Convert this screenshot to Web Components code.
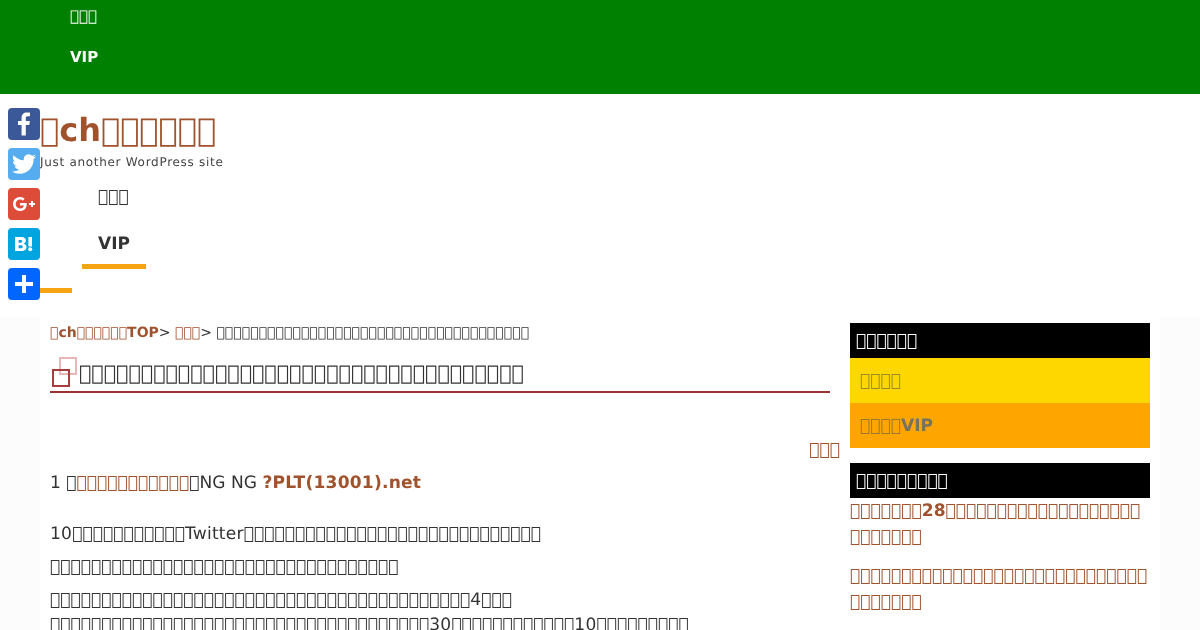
<!DOCTYPE html>
<html lang="ja">
<head>
<meta charset="utf-8">
<title>ch</title>
<style>
html, body { margin: 0; height: 630px; overflow: hidden; }
body { background: #fcfcfd; font-family: "DejaVu Sans", sans-serif; color: #333; text-rendering: geometricPrecision; }
</style>
</head>
<body>
<x-page></x-page>
<script>
// the reference shows only "missing glyph" boxes for its text, ~n = n of them
const T = s => s.replace(/~(\d+)/g, (m, n) => '\uE000'.repeat(+n));

class XTopnav extends HTMLElement {
    constructor() {
        super();
        this.attachShadow({mode: 'open'}).innerHTML = T(`
            <style>
                :host { display: block; background: #008000; color: #fff; font-size: 15px; height: 94px; box-sizing: border-box; padding-left: 70px; }
                ul { list-style: none; margin: 0; padding: 0; display: flex; flex-direction: column; gap: 9px; }
                li { line-height: 32px; }
            </style>
            <ul><li>~3</li><li><b>VIP</b></li></ul>
        `);
    }
}

class XSocial extends HTMLElement {
    constructor() {
        super();
        this.attachShadow({mode: 'open'}).innerHTML = `
            <style>
                :host { position: absolute; left: 8px; top: 108px; display: flex; flex-direction: column; gap: 8px; }
                svg { display: block; width: 32px; height: 32px; border-radius: 4px; }
            </style>
            <svg viewBox="0 0 32 32" style="background:#3b5998"><path fill="#fff" d="M17.78 27.5V17.008h3.522l.527-4.09h-4.05v-2.61c0-1.182.33-1.99 2.023-1.99h2.166V4.66c-.375-.05-1.66-.16-3.155-.16-3.123 0-5.26 1.905-5.26 5.405v3.016h-3.53v4.09h3.53V27.5h4.223z"/></svg>
            <svg viewBox="0 0 32 32" style="background:#55acee"><path fill="#fff" d="M28 8.557a9.913 9.913 0 0 1-2.828.775 4.93 4.93 0 0 0 2.166-2.725 9.738 9.738 0 0 1-3.13 1.194 4.92 4.92 0 0 0-3.593-1.55 4.924 4.924 0 0 0-4.794 6.049c-4.09-.21-7.72-2.17-10.15-5.15a4.942 4.942 0 0 0-.665 2.477c0 1.71.87 3.214 2.19 4.1a4.968 4.968 0 0 1-2.23-.616v.06c0 2.39 1.7 4.38 3.952 4.83-.414.115-.85.174-1.297.174-.318 0-.626-.03-.928-.086a4.935 4.935 0 0 0 4.6 3.42 9.893 9.893 0 0 1-6.114 2.107c-.398 0-.79-.023-1.175-.068a13.953 13.953 0 0 0 7.55 2.213c9.056 0 14.01-7.507 14.01-14.013 0-.213-.005-.426-.015-.637.96-.695 1.795-1.56 2.455-2.55z"/></svg>
            <svg viewBox="0 0 32 32" style="background:#dd4b39"><path fill="#fff" d="M27 15h-2v-2h-2v2h-2v2h2v2h2v-2h2m-15-2v2.4h3.97c-.16 1.03-1.2 3.02-3.97 3.02-2.39 0-4.34-1.98-4.34-4.42s1.95-4.42 4.34-4.42c1.36 0 2.27.58 2.79 1.08l1.9-1.83C15.47 9.69 13.89 9 12 9c-3.87 0-7 3.13-7 7s3.13 7 7 7c4.04 0 6.72-2.84 6.72-6.84 0-.46-.05-.81-.11-1.16H12z"/></svg>
            <svg viewBox="0 0 32 32" style="background:#00a4de"><path fill="#fff" fill-rule="evenodd" d="M7 9h6.4c2.9 0 4.5 1.3 4.5 3.6 0 1.5-.8 2.6-2.3 3.1 1.9.4 2.9 1.6 2.9 3.4 0 2.6-1.8 4-4.9 4H7zM10.6 11.9v2.8h2c1 0 1.6-.5 1.6-1.4s-.6-1.4-1.6-1.4zM10.6 17.3v3h2.2c1.2 0 1.9-.5 1.9-1.5s-.7-1.5-1.9-1.5z"/><path fill="#fff" d="M20.4 9h3.6v9.4h-3.6z"/><circle fill="#fff" cx="22.2" cy="21.2" r="2"/></svg>
            <svg viewBox="0 0 32 32" style="background:#0166ff"><path fill="#fff" d="M14 7h4v18h-4z"/><path fill="#fff" d="M7 14h18v4H7z"/></svg>
        `;
    }
}

class XMainnav extends HTMLElement {
    constructor() {
        super();
        this.attachShadow({mode: 'open'}).innerHTML = T(`
            <style>
                :host { display: block; font-size: 17px; color: #333; }
                ul { list-style: none; margin: 0; padding: 1px 0 0 42px; display: flex; flex-direction: column; width: max-content; }
                li { padding: 0 16px; line-height: 30px; }
                li:first-child { height: 47px; box-sizing: border-box; }
                li.cur { height: 40px; box-sizing: border-box; border-bottom: 5px solid #f5a412; }
                .bar { display: block; width: 32px; height: 5px; background: #f5a412; margin-top: 19px; }
            </style>
            <ul><li>~3</li><li class="cur"><b>VIP</b></li></ul>
            <span class="bar"></span>
        `);
    }
}

class XHeader extends HTMLElement {
    constructor() {
        super();
        this.attachShadow({mode: 'open'}).innerHTML = T(`
            <style>
                :host { display: block; background: #fff; height: 224px; box-sizing: border-box; padding: 16px 0 0 40px; }
                h1 { margin: 0; font-size: 32px; line-height: 40px; font-weight: bold; color: #a0522d; }
                p { margin: 0 0 7px; font-size: 12px; line-height: 24px; letter-spacing: .7px; color: #444; }
            </style>
            <h1>~1ch~6</h1>
            <p>Just another WordPress site</p>
            <x-mainnav></x-mainnav>
        `);
    }
}

class XCrumb extends HTMLElement {
    constructor() {
        super();
        this.attachShadow({mode: 'open'}).innerHTML = T(`
            <style>
                :host { display: block; font-size: 14px; line-height: 20px; color: #333; }
                a { color: #a0522d; text-decoration: none; }
                span { letter-spacing: .05px; }
            </style>
            <a href="#"><b>~1ch~6TOP</b></a>&gt; <a href="#">~3</a>&gt; <span>~37</span>
        `);
    }
}

class XTitle extends HTMLElement {
    constructor() {
        super();
        this.attachShadow({mode: 'open'}).innerHTML = T(`
            <style>
                :host { display: block; position: relative; margin: 7px 10px 0 0; font-size: 20.6px; line-height: 32px; color: #333; border-bottom: 2px solid #993333; padding: 7px 0 2px 29px; }
                i { position: absolute; width: 14px; height: 14px; border: 2px solid; }
                i.a { left: 9px; top: 7px; border-color: #e8b7b7; }
                i.b { left: 2px; top: 19px; border-color: #a93c3c; }
            </style>
            <i class="a"></i><i class="b"></i>~36
        `);
    }
}

class XArticle extends HTMLElement {
    constructor() {
        super();
        this.attachShadow({mode: 'open'}).innerHTML = T(`
            <style>
                :host { display: block; width: 790px; font-size: 17.08px; line-height: 25px; color: #333; padding-top: 5px; }
                a { color: #a0522d; text-decoration: none; }
                .more { text-align: right; margin: 45px 0 8px; }
                p { margin: 0 0 8px; white-space: nowrap; }
                .res { margin-bottom: 26px; }
                .w { letter-spacing: .22px; }
            </style>
            <x-crumb></x-crumb>
            <x-title></x-title>
            <div class="more"><a href="#">~3</a></div>
            <p class="res">1 ~1<a href="#">~11</a>~1NG NG <a href="#" class="w"><b>?PLT(13001).net</b></a></p>
            <p><span class="w">10</span>~11<span class="w">Twitter</span>~29</p>
            <p>~34</p>
            <p>~41<span class="w">4</span>~3<br>~37<span class="w">30</span>~12<span class="w">10</span>~9</p>
        `);
    }
}

class XWidget extends HTMLElement {
    constructor() {
        super();
        this.attachShadow({mode: 'open'}).innerHTML = `
            <style>
                :host { display: block; margin-bottom: 15px; }
                h3 { margin: 0; background: #000; color: #fff; font-size: 17px; font-weight: normal; line-height: 34px; padding: 1px 0 0 6px; }
            </style>
            <h3><slot name="title"></slot></h3>
            <slot></slot>
        `;
    }
}

class XSidebar extends HTMLElement {
    constructor() {
        super();
        this.attachShadow({mode: 'open'}).innerHTML = T(`
            <style>
                :host { display: block; width: 300px; padding-top: 5px; font-size: 17.08px; }
                .rank { line-height: 44px; padding: 1px 0 0 10px; }
                .y { background: #ffd700; color: #998a2a; }
                .o { background: #ffa500; color: #99772e; }
                .o b { color: #77735f; }
                .links { display: flex; flex-direction: column; gap: 14px; padding-top: 1px; line-height: 25.5px; font-weight: bold; color: #a0522d; }
            </style>
            <x-widget>
                <span slot="title">~6</span>
                <div class="rank y">~4</div>
                <div class="rank o">~4<b>VIP</b></div>
            </x-widget>
            <x-widget>
                <span slot="title">~9</span>
                <div class="links">
                    <div>~7<span>28</span>~19<br>~7</div>
                    <div>~29<br>~7</div>
                </div>
            </x-widget>
        `);
    }
}

class XPage extends HTMLElement {
    constructor() {
        super();
        this.attachShadow({mode: 'open'}).innerHTML = `
            <style>
                :host { display: block; position: relative; height: 630px; overflow: hidden; will-change: opacity; }
                main { display: flex; gap: 10px; margin: 0 40px; padding-left: 10px; background: #fff; height: 312px; }
            </style>
            <x-topnav></x-topnav>
            <x-header></x-header>
            <main>
                <x-article></x-article>
                <x-sidebar></x-sidebar>
            </main>
            <x-social></x-social>
        `;
    }
}

customElements.define('x-topnav', XTopnav);
customElements.define('x-social', XSocial);
customElements.define('x-mainnav', XMainnav);
customElements.define('x-header', XHeader);
customElements.define('x-crumb', XCrumb);
customElements.define('x-title', XTitle);
customElements.define('x-article', XArticle);
customElements.define('x-widget', XWidget);
customElements.define('x-sidebar', XSidebar);
customElements.define('x-page', XPage);
</script>
</body>
</html>
